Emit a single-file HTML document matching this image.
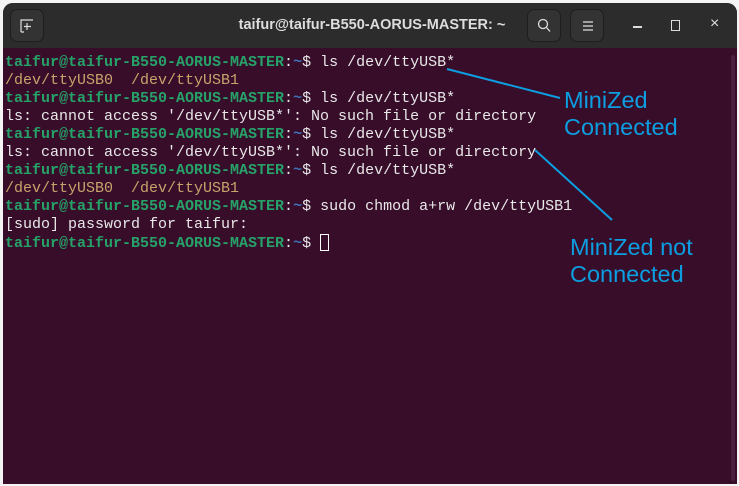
<!DOCTYPE html>
<html><head><style>
body{margin:0;width:739px;height:486px;background:#f4f4f4;position:relative;overflow:hidden;font-family:"Liberation Sans",sans-serif}
.win{position:absolute;left:3px;top:3px;width:734px;height:481px;background:#380d2a;border-radius:10px 10px 0 0;overflow:hidden}
.tb{position:absolute;left:0;top:0;width:100%;height:45px;background:#2c2c2c}
.title{position:absolute;left:0;width:738px;top:14px;text-align:center;color:#ddd;font-weight:bold;font-size:14.5px}
.btn{position:absolute;top:6px;width:34px;height:33px;border-radius:7px;background:#333;border:1px solid #1e1e1e;box-sizing:border-box}
.term{position:absolute;left:2px;top:51px;font-family:"Liberation Mono",monospace;font-size:15px;line-height:18px;color:#e8e8e8;white-space:pre}
.g{color:#26a269;font-weight:bold}.b{color:#3f6fb5;font-weight:bold}.y{color:#c9a36b}
.ann{position:absolute;color:#0c9ee0;font-size:23.5px;line-height:27px}
.sb{position:absolute;right:2px;top:52px;width:4px;height:426px;background:#4a2040;border-radius:2px}
</style></head><body>
<div class="win">
<div class="tb">
<div class="btn" style="left:7px"></div>
<svg style="position:absolute;left:17px;top:16px" width="14" height="14"><path d="M1 13V1h12M7 4v7M4 7.5h7M1 13h3" stroke="#ddd" fill="none" stroke-width="1.2"/></svg>
<div class="title">taifur@taifur-B550-AORUS-MASTER: ~</div>
<div class="btn" style="left:524px"></div>
<svg style="position:absolute;left:534px;top:15px" width="14" height="15"><circle cx="6" cy="6" r="4.5" stroke="#ddd" fill="none" stroke-width="1.3"/><path d="M9.5 9.5l3.5 4" stroke="#ddd" stroke-width="1.3"/></svg>
<div class="btn" style="left:567px"></div>
<svg style="position:absolute;left:579px;top:17px" width="12" height="12"><path d="M1 2h10M1 6h10M1 10h10" stroke="#ddd" stroke-width="1.2"/></svg>
<div style="position:absolute;left:630px;top:23px;width:9px;height:1.5px;background:#ddd"></div>
<div style="position:absolute;left:668px;top:17px;width:7px;height:9px;border:1.3px solid #ddd"></div>
<div style="position:absolute;left:707px;top:12px;color:#ddd;font-size:16px">×</div>
</div>
<div class="term"><span class="g">taifur@taifur-B550-AORUS-MASTER</span>:<span class="b">~</span>$ ls /dev/ttyUSB*
<span class="y">/dev/ttyUSB0  /dev/ttyUSB1</span>
<span class="g">taifur@taifur-B550-AORUS-MASTER</span>:<span class="b">~</span>$ ls /dev/ttyUSB*
ls: cannot access '/dev/ttyUSB*': No such file or directory
<span class="g">taifur@taifur-B550-AORUS-MASTER</span>:<span class="b">~</span>$ ls /dev/ttyUSB*
ls: cannot access '/dev/ttyUSB*': No such file or directory
<span class="g">taifur@taifur-B550-AORUS-MASTER</span>:<span class="b">~</span>$ ls /dev/ttyUSB*
<span class="y">/dev/ttyUSB0  /dev/ttyUSB1</span>
<span class="g">taifur@taifur-B550-AORUS-MASTER</span>:<span class="b">~</span>$ sudo chmod a+rw /dev/ttyUSB1
[sudo] password for taifur:
<span class="g">taifur@taifur-B550-AORUS-MASTER</span>:<span class="b">~</span>$ <span style="display:inline-block;width:9px;height:17px;border:1px solid #fff;box-sizing:border-box;vertical-align:-4px"></span></div>
<div class="sb"></div>
</div>
<svg style="position:absolute;left:0;top:0" width="739" height="486"><path d="M447 69L560 98M535 150L612 220" stroke="#0c9ee0" stroke-width="2"/></svg>
<div class="ann" style="left:564px;top:87px">MiniZed<br>Connected</div>
<div class="ann" style="left:570px;top:234px">MiniZed not<br>Connected</div>
</body></html>
